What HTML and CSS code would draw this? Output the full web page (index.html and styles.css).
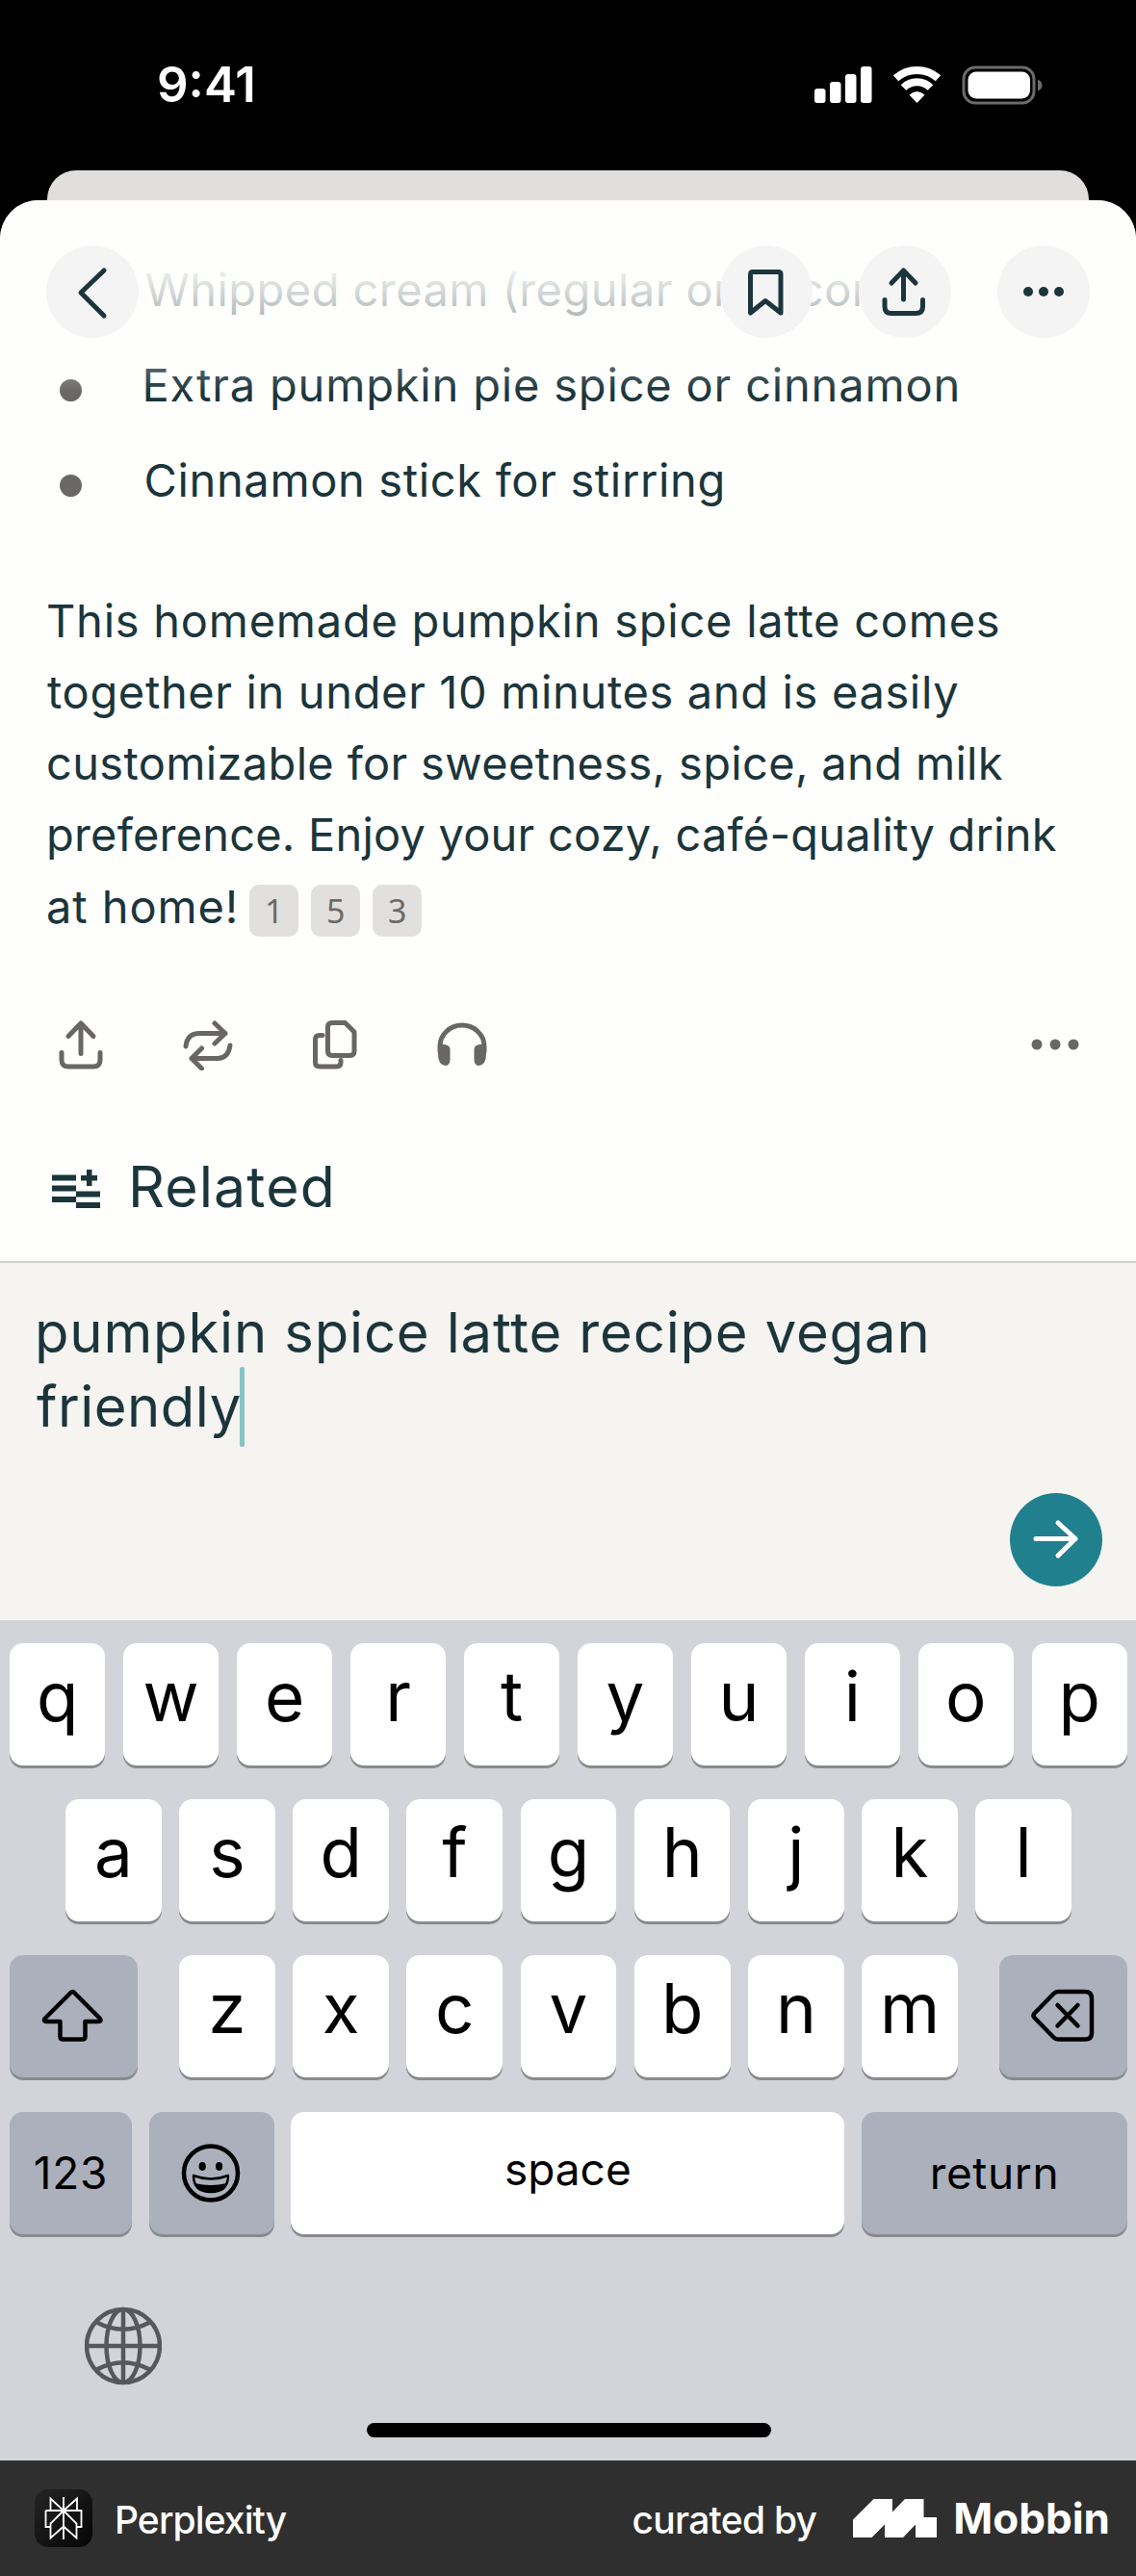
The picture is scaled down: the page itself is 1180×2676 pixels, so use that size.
FILE: index.html
```
<!DOCTYPE html>
<html lang="en">
<head>
<meta charset="utf-8">
<title>Perplexity</title>
<link rel="stylesheet" href="styles.css">
</head>
<body>
<div class="screen">
  <header class="status">
    <div class="time">9:41</div>
    <svg class="status-icons" width="238" height="44" viewBox="0 0 238 44">
      <g fill="#fff">
        <rect x="0" y="25" width="11.5" height="15" rx="3"/>
        <rect x="16" y="18" width="11.5" height="22" rx="3"/>
        <rect x="32" y="10" width="11.5" height="30" rx="3"/>
        <rect x="48" y="2" width="11.5" height="38" rx="3"/>
      </g>
      <g fill="none" stroke="#fff" stroke-width="8">
        <path d="M84.500 14.300A33 33 0 0 1 128.500 14.300"/>
        <path d="M92.500 24A20 20 0 0 1 120.500 24"/>
      </g>
      <path d="M98.500 31.500Q106.500 24.500 114.500 31.500L107.500 39Q106.500 40 105.500 39Z" fill="#fff"/>
      <rect x="155" y="3" width="73" height="37" rx="12" fill="none" stroke="#6b6a6c" stroke-width="3"/>
      <rect x="159.500" y="7.500" width="64.500" height="28" rx="8.500" fill="#fff"/>
      <path d="M232 15.500Q236.500 17.500 236.500 21.500T232 27.500Z" fill="#6b6a6c"/>
    </svg>
  </header>
  <div class="back-sheet"></div>

  <main class="sheet">
    <ul class="toppings">
      <li><span class="dot"></span><span class="t1">Whipped cream (regular or coconut)</span></li>
      <li><span class="dot"></span><span class="t2">Extra pumpkin pie spice or cinnamon</span></li>
      <li><span class="dot"></span><span class="t3">Cinnamon stick for stirring</span></li>
    </ul>
    <p class="summary">
      <span class="line p1">This homemade pumpkin spice latte comes</span>
      <span class="line p2">together in under 10 minutes and is easily</span>
      <span class="line p3">customizable for sweetness, spice, and milk</span>
      <span class="line p4">preference. Enjoy your cozy, café-quality drink</span>
      <span class="line"><span class="p5">at home!</span><span class="cites"><b>1</b><b>5</b><b>3</b></span></span>
    </p>
    <div class="actions">
      <svg width="54" height="54" viewBox="0 0 54 54"><path d="M27 36.500V5M14 18.500L27 5L40 18.500M7 35.500V43Q7 50 14 50H40Q47 50 47 43V35.500"/></svg>
      <svg width="54" height="54" viewBox="0 0 54 54"><path d="M4 29Q5.500 15.500 18 15.500H45M34 5L45 15.500L34 26M50 28Q48 41.500 37 41.500H10M20.500 31L10 41.500L20.500 52"/></svg>
      <svg width="54" height="54" viewBox="0 0 54 54"><path d="M24 4.500H37.500L47 14V34Q47 38.500 42.500 38.500H24Q19.500 38.500 19.500 34V9Q19.500 4.500 24 4.500ZM14 17.500H11Q6.500 17.500 6.500 22V45.500Q6.500 50 11 50H28.500Q33 50 33 45.500V43.500"/></svg>
      <svg width="54" height="54" viewBox="0 0 54 54"><path d="M4 34V29A23 22 0 0 1 50 29V34"/><path class="fill" d="M2 27H9Q14.500 28 14.500 32V43Q14 49 9.500 49Q2 48 2 37ZM52 27H45Q39.500 28 39.500 32V43Q40 49 44.500 49Q52 48 52 37Z"/></svg>
      <svg class="more" width="54" height="54" viewBox="0 0 54 54"><g class="fill"><circle cx="8" cy="27" r="5.500"/><circle cx="27" cy="27" r="5.500"/><circle cx="46" cy="27" r="5.500"/></g></svg>
    </div>
    <h2 class="related">
      <svg width="50" height="40" viewBox="0 0 50 40"><path d="M0 5.500H25V11.500H0ZM0 16.500H25V22.500H0ZM0 28H25V34H0ZM25 22.500H50V28.500H25ZM25 34H50V40H25ZM30 6H36V0H41.500V6H47V11.500H41.500V17H36V11.500H30Z" fill="#1b353b"/></svg>
      <span>Related</span>
    </h2>
    <div class="fade"></div>
    <nav class="toolbar">
      <span class="round"><svg width="96" height="96" viewBox="0 0 96 96"><path d="M60 26L36 49L60 73"/></svg></span>
      <span class="round push"><svg width="96" height="96" viewBox="0 0 96 96"><path d="M31.500 70V30Q31.500 27.500 34 27.500H60.500Q63 27.500 63 30V70L47 57.500Z"/></svg></span>
      <span class="round gap"><svg width="96" height="96" viewBox="0 0 96 96"><path d="M46.500 56V26M34 39L46.500 26L59 39M27 56.500V63.500Q27 70.500 34 70.500H59Q66.500 70.500 66.500 63.500V56.500"/></svg></span>
      <span class="round gap"><svg width="96" height="96" viewBox="0 0 96 96"><g class="fill"><circle cx="32" cy="48" r="5"/><circle cx="48" cy="48" r="5"/><circle cx="64" cy="48" r="5"/></g></svg></span>
    </nav>
  </main>

  <section class="composer">
    <div class="query">
      <div class="q1">pumpkin spice latte recipe vegan</div>
      <div class="q2">friendly<i class="caret"></i></div>
    </div>
    <div class="send"><svg width="97" height="97" viewBox="0 0 97 97"><path d="M27 47.500H68M50 31L68 47.500L50 65"/></svg></div>
  </section>

  <section class="keyboard">
    <div class="row r1"><kbd>q</kbd><kbd>w</kbd><kbd>e</kbd><kbd>r</kbd><kbd>t</kbd><kbd>y</kbd><kbd>u</kbd><kbd>i</kbd><kbd>o</kbd><kbd>p</kbd></div>
    <div class="row r2"><kbd>a</kbd><kbd>s</kbd><kbd>d</kbd><kbd>f</kbd><kbd>g</kbd><kbd>h</kbd><kbd>j</kbd><kbd>k</kbd><kbd>l</kbd></div>
    <div class="row r3">
      <span class="key dark"><svg width="133" height="127" viewBox="0 0 133 127"><path d="M63.500 39Q65.300 37 67.100 39L94 66Q96 69 92 69H78.500V84.500Q78.500 87.500 75.500 87.500H55.500Q52.500 87.500 52.500 84.500V69H38.500Q34.500 69 36.500 66Z"/></svg></span>
      <div class="letters"><kbd>z</kbd><kbd>x</kbd><kbd>c</kbd><kbd>v</kbd><kbd>b</kbd><kbd>n</kbd><kbd>m</kbd></div>
      <span class="key dark"><svg width="133" height="127" viewBox="0 0 133 127"><path d="M61 38H89Q96 38 96 45V81Q96 87.500 89 87.500H61Q58.500 87.500 56.500 85.500L36.500 65Q34.500 63 36.500 60.500L56.500 40Q58.500 38 61 38ZM60.500 52L81.500 73.500M81.500 52L60.500 73.500"/></svg></span>
    </div>
    <div class="row r4">
      <span class="key dark word num">123</span>
      <span class="key dark"><svg width="130" height="127" viewBox="0 0 130 127"><circle cx="64" cy="63.500" r="28"/><g class="ink"><ellipse cx="55.200" cy="56.500" rx="3.600" ry="4.400"/><ellipse cx="72.600" cy="56.500" rx="3.600" ry="4.400"/><path d="M47 74Q64 78 80.500 74Q76 83.500 64 83.500T47 74Z"/></g><path class="thin" d="M46 66Q64 73 82 66Q82 83 64 83T46 66Z"/></svg></span>
      <span class="key word space">space</span>
      <span class="key dark word ret">return</span>
    </div>
    <div class="globe"><svg width="80" height="82" viewBox="0 0 80 82"><circle cx="40" cy="41" r="38"/><ellipse cx="40" cy="41" rx="17.500" ry="38"/><path d="M40 3V79M2 41H78M12.500 16.500Q40 31 67.500 16.500M12.500 65.500Q40 51 67.500 65.500"/></svg></div>
    <div class="home"></div>
  </section>

  <footer class="credit">
    <svg class="app" width="60" height="60" viewBox="0 0 60 60">
      <defs><linearGradient id="g" x1="0" y1="0" x2="1" y2="1"><stop offset="0" stop-color="#242424"/><stop offset="1" stop-color="#050505"/></linearGradient></defs>
      <rect width="60" height="60" rx="14" fill="url(#g)"/>
      <path d="M30 8V52M30 22L16.500 9.500V22M30 22L44 9.500V22M11.500 22H48.500V39H44M16.500 39H11.500V22M30 22L16.500 35.500V50.500L30 38.500L43.500 50.500V35.500L30 22" fill="none" stroke="#fff" stroke-width="1.800"/>
    </svg>
    <span class="name">Perplexity</span>
    <span class="by">curated by</span>
    <svg class="mark" width="87" height="40" viewBox="0 0 87 40"><path d="M0 21.500L21.500 0H41V13.500L54 0H73.500V19H87V40H65V26.500L52 40H33V26.500L19.500 40H0Z" fill="#fff"/></svg>
    <span class="brand">Mobbin</span>
  </footer>
</div>
</body>
</html>
```
FILE: styles.css
```
* { box-sizing: border-box; }
body { margin: 0; font-family: Inter, "Liberation Sans", sans-serif; color: #1b353b; }
.screen { width: 1180px; height: 2676px; display: flex; flex-direction: column; background: #000; overflow: hidden; }

.status { height: 177px; padding: 0 96px 0 163px; display: flex; justify-content: space-between; }
.time { color: #fff; font-size: 51px; font-weight: 600; line-height: 60px; padding-top: 58px; }
.status-icons { margin-top: 67px; display: block; }
.back-sheet { height: 31px; margin: 0 49px; background: #e0dfdd; border-radius: 30px 30px 0 0; }

.sheet { position: relative; height: 1102px; background: #fefefc; border-radius: 40px 40px 0 0; padding-top: 43px; }
.toppings { list-style: none; margin: 0; padding: 0 0 0 61.500px; font-size: 47px; line-height: 99px; white-space: nowrap; }
.toppings li { display: flex; align-items: center; height: 99px; }
.toppings .dot { width: 23px; height: 23px; margin: 12px 63px 0 0; border-radius: 50%; background: #6a6864; flex: none; }
.t1 { letter-spacing: .45px; margin-left: 3px; }
.t2 { letter-spacing: .82px; }
.t3 { letter-spacing: .65px; margin-left: 2px; }
.summary { margin: 60px 0 0 48px; font-size: 47px; line-height: 74.150px; white-space: nowrap; }
.line { display: block; height: 74.150px; }
.p1 { letter-spacing: .75px; }
.p2 { letter-spacing: .64px; padding-left: 1px; }
.p3 { letter-spacing: .34px; }
.p4 { letter-spacing: .2px; }
.p5 { letter-spacing: .9px; }
.cites { display: inline-flex; gap: 13px; margin-left: 11px; }
.cites b { width: 51px; height: 54px; border-radius: 10px; background: #e1e0de; color: #6c6a67; font: 400 34px/54px "Noto Sans", sans-serif; text-align: center; }

.actions { display: flex; gap: 78px; margin: 79px 57px 0 57px; height: 54px; }
.actions svg { fill: none; stroke: #696764; stroke-width: 5; stroke-linecap: round; stroke-linejoin: round; }
.actions .more { margin-left: auto; }
.actions .fill, .round .fill { stroke: none; }
.actions .fill { fill: #696764; }
.related { margin: 91px 0 0 54px; height: 60px; display: flex; align-items: center; gap: 29px; font-size: 59px; font-weight: 400; line-height: 60px; letter-spacing: 1.100px; }
.related svg { margin-top: 5px; }

.fade { position: absolute; left: 0; right: 0; top: 0; height: 200px; border-radius: 40px 40px 0 0; background: linear-gradient(#fefefc 0 25%, rgba(254,254,252,.91) 38%, rgba(254,254,252,.7) 57%, rgba(254,254,252,.25) 86%, rgba(254,254,252,0)); }
.toolbar { position: absolute; left: 0; right: 0; top: 47px; padding: 0 48px; display: flex; }
.round { width: 96px; height: 96px; border-radius: 50%; background: #f5f4f5; }
.round svg { display: block; fill: none; stroke: #1b353b; stroke-width: 5; stroke-linecap: round; stroke-linejoin: round; }
.round .fill { fill: #1b353b; }
.push { margin-left: auto; }
.gap { margin-left: 48px; }

.composer { height: 373px; background: #f5f4f0; border-top: 2px solid #d1d0cd; padding: 34px 35px 0; display: flex; flex-direction: column; justify-content: space-between; }
.query { font-size: 58px; line-height: 76.700px; white-space: nowrap; }
.q1 { letter-spacing: .83px; padding-left: 1px; }
.q2 { position: relative; width: max-content; letter-spacing: .5px; padding-left: 3px; }
.caret { position: absolute; left: 214px; top: -3px; width: 5px; height: 83px; border-radius: 2px; background: #86c4c6; }
.send { align-self: flex-end; width: 96px; height: 97px; margin-bottom: 35px; border-radius: 50%; background: #21808d; }
.send svg { display: block; fill: none; stroke: #fff; stroke-width: 5; stroke-linecap: round; stroke-linejoin: round; }

.keyboard { height: 873px; padding: 24px 9px 0 10px; background: #d3d4da; color: #000; display: flex; flex-direction: column; }
.row { height: 127px; margin-bottom: 35.200px; flex: none; }
.r1, .r2, .letters { display: grid; column-gap: 18.500px; }
.r1 { grid-template-columns: repeat(10, 1fr); }
.r2 { grid-template-columns: repeat(9, 1fr); padding: 0 58px; }
.r3, .r4 { display: flex; justify-content: space-between; }
.letters { width: 809px; grid-template-columns: repeat(7, 1fr); }
kbd, .key { height: 127px; border-radius: 14px; background: #fff; box-shadow: 0 3px 0 #898a8e; display: flex; align-items: center; justify-content: center; }
kbd { font: 400 71px/90px Inter, sans-serif; padding-bottom: 17px; }
.key.dark { background: #abb0bc; }
.key svg { display: block; fill: none; stroke: #000; stroke-width: 4.500; stroke-linejoin: round; stroke-linecap: round; }
.key svg .ink { fill: #000; stroke: none; }
.key svg .thin { stroke-width: 2.500; }
.word { font-size: 46px; line-height: 60px; }
.num { width: 127px; letter-spacing: .8px; }
.space { width: 575px; padding-bottom: 9px; }
.ret { width: 276px; letter-spacing: .6px; }
.globe { margin: 40px 0 0 78px; height: 82px; }
.globe svg { display: block; fill: none; stroke: #565860; stroke-width: 4.500; }
.home { width: 420px; height: 15px; margin: 39px auto 0; border-radius: 8px; background: #000; }

.credit { height: 120px; padding: 0 27px 0 36px; background: #2f2f2f; color: #fff; display: flex; align-items: center; }
.name, .by { font-size: 39px; font-weight: 500; line-height: 60px; letter-spacing: -.9px; padding-top: 3px; }
.name { margin-left: 23px; }
.by { margin-left: auto; letter-spacing: -.75px; }
.mark { margin-left: 38px; }
.brand { margin-left: 17px; font-size: 44px; font-weight: 700; line-height: 60px; }
```
